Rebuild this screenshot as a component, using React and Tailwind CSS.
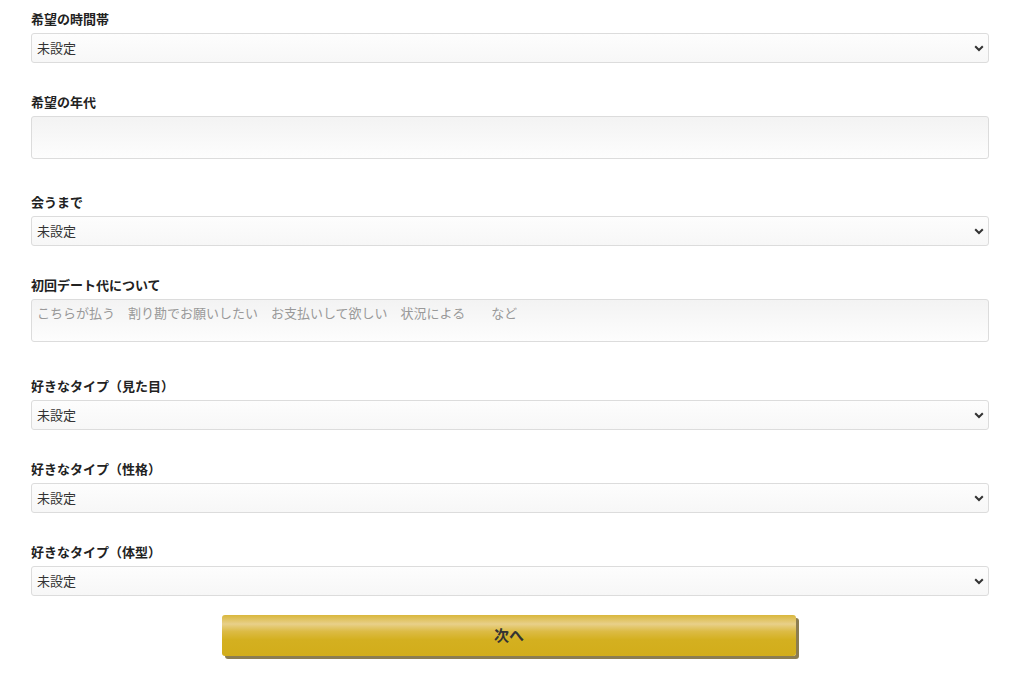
import { useState } from "react"

const font = { fontFamily: '"Noto Sans CJK JP", "Noto Sans", sans-serif' }

const options = ['未設定']

const Chevron = () => (
  <svg className="pointer-events-none absolute right-[5px] top-[12px]" width="10" height="7" viewBox="0 0 10 7">
    <path d="M1.2 1.2 L5 5 L8.8 1.2" fill="none" stroke="#333" strokeWidth="2" />
  </svg>
)

const SelectField = ({ label }) => {
  const [value, setValue] = useState('未設定')
  return (
    <div className="mb-[30px]">
      <label className="block text-[13px] font-bold leading-[18px] text-[#222] mb-[5px]">{label}</label>
      <div className="relative">
        <select
          value={value}
          onChange={e => setValue(e.target.value)}
          className="block w-full h-[30px] appearance-none rounded-[3px] border border-[#dcdcdc] bg-gradient-to-b from-[#fdfdfd] to-[#f7f7f7] pl-[5px] text-[13px] text-[#333] outline-none"
        >
          {options.map(o => <option key={o}>{o}</option>)}
        </select>
        <Chevron />
      </div>
    </div>
  )
}

const TextField = ({ label, placeholder, last }) => (
  <div className={last ? "mb-[35px]" : "mb-[34px]"}>
    <label className="block text-[13px] font-bold leading-[18px] text-[#222] mb-[5px]">{label}</label>
    <textarea
      placeholder={placeholder}
      className="block w-full h-[43px] resize-none rounded-[3px] border border-[#dcdcdc] bg-gradient-to-b from-[#f3f3f3] to-[#fdfdfd] px-[5px] pt-[4px] text-[13px] leading-[18px] text-[#333] placeholder:text-[#999] outline-none"
    />
  </div>
)

const App = () => {
  return (
    <div className="min-h-screen bg-white" style={font}>
      <form className="w-[958px] ml-[31px] pt-[10px]" onSubmit={e => e.preventDefault()}>
        <SelectField label="希望の時間帯" />
        <TextField label="希望の年代" />
        <SelectField label="会うまで" />
        <TextField
          label="初回デート代について"
          placeholder="こちらが払う　割り勘でお願いしたい　お支払いして欲しい　状況による　　など"
          last
        />
        <SelectField label="好きなタイプ（見た目）" />
        <SelectField label="好きなタイプ（性格）" />
        <div className="-mb-[11px]">
          <SelectField label="好きなタイプ（体型）" />
        </div>
        <div className="flex justify-center pr-[2px]">
          <button
            type="submit"
            className="w-[574px] h-[41px] rounded-[3px] bg-[linear-gradient(to_bottom,#d9b73c_0%,#e8d08a_22%,#dcbb45_40%,#d4b020_60%,#d2ad1a_100%)] shadow-[3px_3px_0_#8c7d50] text-[15px] font-bold text-[#333]"
          >
            次へ
          </button>
        </div>
      </form>
    </div>
  )
}

export default App
